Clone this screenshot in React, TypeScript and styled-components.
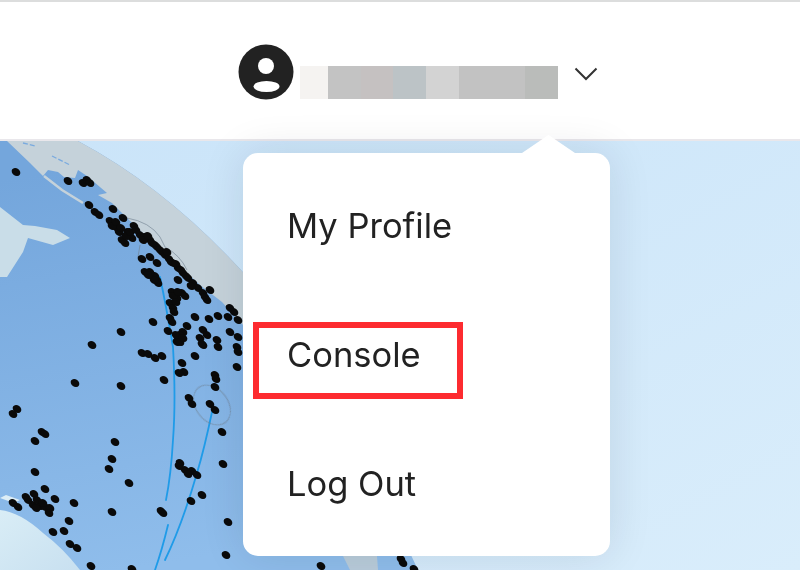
import React from "react";
import styled, { createGlobalStyle } from "styled-components";

const GlobalStyle = createGlobalStyle`
  html, body {
    margin: 0;
    padding: 0;
    background: #fff;
    overflow: hidden;
  }
`;

// the screenshot is a slightly soft upscale, so the whole page gets a small blur
const Page = styled.div`
  position: relative;
  width: 800px;
  height: 570px;
  overflow: hidden;
  font-family: Inter, "Liberation Sans", sans-serif;
  color: #222;
  filter: blur(0.5px);
`;

const Header = styled.header`
  display: flex;
  align-items: center;
  box-sizing: border-box;
  height: 141px;
  padding: 3px 0 0 238px;
  background: #fff;
  border-top: 2px solid #dcdddd;
  border-bottom: 2px solid #e9e7eb;
`;

const Avatar = styled.svg`
  display: block;
  width: 56px;
  height: 56px;
  flex: none;
`;

const BlurredName = styled.div`
  display: flex;
  height: 33px;
  margin: 21px 0 0 6px;
`;

const NameBlock = styled.span<{ $shade: string; $width: number }>`
  display: block;
  width: ${(p) => p.$width}px;
  background: ${(p) => p.$shade};
`;

const Chevron = styled.svg`
  display: block;
  width: 24px;
  height: 14px;
  margin: 4px 0 0 16px;
  flex: none;
`;

const MapArea = styled.svg`
  display: block;
  width: 800px;
  height: 429px;
`;

const Menu = styled.nav`
  position: absolute;
  top: 153px;
  left: 243px;
  width: 367px;
  box-sizing: border-box;
  padding: 9px 44px 7px;
  background: #fff;
  border-radius: 15px;
  box-shadow: 0 0 44px rgba(20, 30, 50, 0.11);
`;

const MenuArrow = styled.div`
  position: absolute;
  top: -18px;
  left: 279px;
  width: 53px;
  height: 18px;
  background: #fff;
  clip-path: polygon(50% 0, 100% 100%, 0 100%);
`;

const MenuItem = styled.a`
  display: flex;
  align-items: center;
  height: 129px;
  font-size: 34.5px;
  line-height: 1;
  color: #222;
`;

const Highlight = styled.div`
  position: absolute;
  top: 322px;
  left: 253px;
  width: 210px;
  height: 77px;
  box-sizing: border-box;
  border: 6px solid #fd2b30;
`;

const nameBlocks = [
  { shade: "#f5f3f1", width: 28 },
  { shade: "#c3c3c3", width: 33 },
  { shade: "#c5c1c1", width: 32 },
  { shade: "#bcc3c6", width: 33 },
  { shade: "#d3d3d3", width: 33 },
  { shade: "#c2c2c2", width: 66 },
  { shade: "#babcba", width: 33 },
];

const dots: [number, number][] = [
  [16, 172], [68, 181], [83, 183], [87, 180], [90, 183], [89, 205], [95, 212], [99, 215],
  [113, 209], [123, 218], [110, 221], [113, 223], [117, 228], [119, 232], [128, 232], [132, 238],
  [125, 243], [122, 240], [134, 226], [140, 235], [145, 237], [150, 240], [155, 245], [157, 247],
  [162, 252], [165, 255], [169, 259], [173, 263], [178, 268], [183, 273], [188, 278], [193, 283],
  [198, 288], [203, 293], [210, 290], [207, 300], [230, 308], [234, 312], [228, 317], [238, 320],
  [142, 259], [150, 257], [157, 263], [145, 272], [152, 275], [157, 280], [158, 283], [155, 276],
  [178, 280], [172, 292], [182, 293], [177, 298], [170, 303], [173, 308], [170, 318], [172, 322],
  [195, 317], [209, 319], [218, 316], [153, 322], [121, 332], [168, 331], [187, 326], [183, 332],
  [178, 338], [177, 342], [180, 342], [203, 330], [207, 335], [200, 338], [203, 345], [217, 340],
  [218, 347], [230, 332], [238, 337], [237, 347], [92, 345], [142, 353], [148, 354], [155, 358],
  [162, 356], [202, 344], [238, 352], [195, 356], [182, 363], [184, 372], [179, 373], [164, 380],
  [215, 375], [216, 379], [215, 387], [237, 367], [75, 383], [121, 386], [189, 398], [192, 404],
  [210, 404], [215, 410], [222, 432], [17, 409], [13, 414], [42, 432], [45, 434], [35, 441],
  [115, 442], [112, 459], [109, 469], [35, 472], [180, 463], [185, 470], [192, 471], [197, 475],
  [223, 464], [129, 483], [45, 489], [202, 495], [191, 501], [26, 497], [34, 494], [55, 499],
  [13, 503], [18, 507], [33, 505], [40, 506], [45, 507], [50, 508], [49, 513], [74, 503],
  [112, 512], [161, 511], [163, 513], [228, 522], [69, 521], [53, 532], [64, 531], [70, 544],
  [77, 548], [226, 555], [91, 566], [132, 569], [321, 566], [401, 559], [403, 563], [414, 569],
  // denser cluster along the coast
  [112, 226], [116, 222], [121, 228], [126, 236], [130, 232], [136, 230], [143, 240], [148, 236],
  [152, 243], [160, 250], [167, 252], [171, 262], [176, 264], [181, 270], [186, 276], [191, 286],
  [150, 272], [154, 280], [148, 275], [173, 296], [176, 302], [174, 312], [178, 292], [185, 296],
  [180, 335], [176, 335], [183, 338], [205, 297], [28, 500], [37, 500], [43, 503], [36, 508],
  [179, 466], [188, 474],
];

export default function App() {
  return (
    <Page>
      <GlobalStyle />
      <Header>
        <Avatar viewBox="0 0 56 56">
          <circle cx="28" cy="28" r="27.5" fill="#222" />
          <circle cx="28" cy="22" r="8" fill="#fff" />
          <ellipse cx="28.5" cy="42.5" rx="13" ry="5.5" fill="#fff" />
        </Avatar>
        <BlurredName>
          {nameBlocks.map((b, i) => (
            <NameBlock key={i} $shade={b.shade} $width={b.width} />
          ))}
        </BlurredName>
        <Chevron viewBox="0 0 24 14">
          <path d="M1.5 1.5 L12 12 L22.5 1.5" fill="none" stroke="#333" strokeWidth="2" />
        </Chevron>
      </Header>
      <MapArea viewBox="0 141 800 429">
        <defs>
          <linearGradient id="sky" x1="0" y1="0" x2="1" y2="1">
            <stop offset="0" stopColor="#cae4f9" />
            <stop offset="1" stopColor="#d9edfb" />
          </linearGradient>
          <linearGradient id="ocean" gradientUnits="userSpaceOnUse" x1="60" y1="170" x2="130" y2="570">
            <stop offset="0" stopColor="#74a6dc" />
            <stop offset="1" stopColor="#8fbdeb" />
          </linearGradient>
          <linearGradient id="ice" x1="0" y1="0" x2="1" y2="1">
            <stop offset="0" stopColor="#d9edf6" />
            <stop offset="1" stopColor="#c8e0f0" />
          </linearGradient>
        </defs>
        <rect x="0" y="141" width="800" height="429" fill="url(#sky)" />
        <path d="M0 141 H78 Q170 190 250 280 Q340 400 418 570 H0 Z" fill="url(#ocean)" />
        <path
          d="M7 141 H78 Q170 190 250 280 V330 L243 325 L222 302 L200 285 L175 262 L150 240 L127 218 L112 203 L98 195 L107 193 L87 176 L78 170 L75 178 L64 177 L58 172 L48 170 L43 176 L30 163 Z"
          fill="#c5d2da"
        />
        <path d="M44 176 L62 190 L83 203" fill="none" stroke="#c5d2da" strokeWidth="2.5" />
        <path d="M343 556 H377 L378 570 H350 Z" fill="#b9ccda" />
        <g fill="none" stroke="#79aadf" strokeWidth="1.3" strokeDasharray="5 2">
          <path d="M23 143 L35 146" />
          <path d="M52 156 L70 165" />
        </g>
        <path
          d="M0 207 L23 225 L35 226 L57 230 L70 238 L53 245 L28 238 L23 252 L7 277 L0 277 Z"
          fill="#c9dde8"
        />
        <path d="M0 510 Q20 512 43 533 Q63 548 80 570 H0 Z" fill="url(#ice)" />
        <path d="M0 498 L6 495 L20 500 L14 503 Z" fill="#dcedf6" />
        <g fill="none" stroke="#1f9be8" strokeWidth="1.8" strokeLinecap="round">
          <path d="M160 277 Q166 305 173 347 Q176 400 173 440 Q171 475 166 500" />
          <path d="M212 412 Q204 450 197 473 Q182 525 165 560" />
          <path d="M168 525 Q162 550 155 570" />
        </g>
        <g fill="none" stroke="#6f7f8e" strokeWidth="0.8" opacity="0.75">
          <ellipse cx="212" cy="405" rx="16" ry="22" transform="rotate(-38 212 405)" />
          <path d="M127 218 Q150 222 160 237 L165 247 Q180 255 187 270" />
          <path d="M140 245 L138 257" />
        </g>
        <g fill="#0a0a0a">
          {dots.map(([x, y], i) => (
            <ellipse key={i} cx={x} cy={y} rx="4.6" ry="3.7" transform={`rotate(35 ${x} ${y})`} />
          ))}
        </g>
      </MapArea>
      <Menu>
        <MenuArrow />
        <MenuItem>My Profile</MenuItem>
        <MenuItem>Console</MenuItem>
        <MenuItem>Log Out</MenuItem>
      </Menu>
      <Highlight />
    </Page>
  );
}
